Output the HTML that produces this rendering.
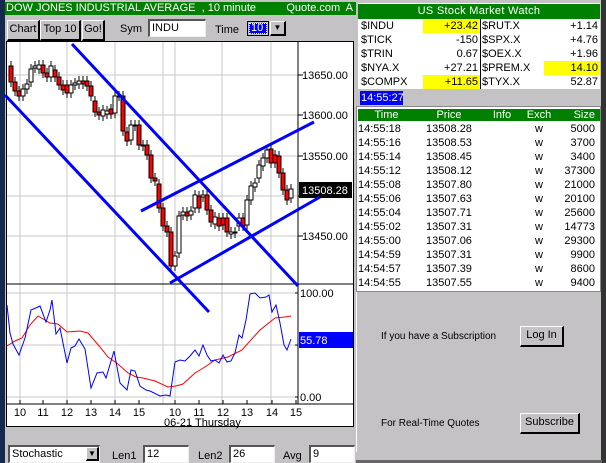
<!DOCTYPE html>
<html><head><meta charset="utf-8">
<style>
*{margin:0;padding:0;box-sizing:border-box}
body{width:606px;height:463px;background:#c4c2c4;font-family:"Liberation Sans",sans-serif;font-size:11px;position:relative;overflow:hidden}
.a{position:absolute}
.btn{position:absolute;background:#c4c2c4;border-top:1px solid #fff;border-left:1px solid #fff;border-right:2px solid #000;border-bottom:2px solid #000;text-align:center;line-height:17px;font-size:11px}
.inp{position:absolute;background:#fff;border-top:2px solid #555;border-left:2px solid #555;border-right:1px solid #eee;border-bottom:1px solid #eee;padding-left:2px;line-height:15px}
.q td{height:14px;line-height:14px;padding:0 2px;white-space:nowrap}
.t td{height:14px;line-height:14px;white-space:nowrap}
</style></head><body>
<div class="a" style="left:0;top:0;width:5px;height:463px;background:#142850"></div>
<div class="a" style="left:601px;top:0;width:5px;height:463px;background:#333"></div>
<!-- left header -->
<div class="a" style="left:5px;top:2px;width:351px;height:13px;background:#008000;color:#fff;line-height:13px;font-size:11px;padding-left:1px">DOW JONES INDUSTRIAL AVERAGE&nbsp; , 10 minute<span style="position:absolute;right:3px">Quote.com&nbsp; A</span></div>
<div class="btn" style="left:7px;top:20px;width:33px;height:21px">Chart</div>
<div class="btn" style="left:40px;top:20px;width:41px;height:21px">Top 10</div>
<div class="btn" style="left:82px;top:20px;width:23px;height:21px">Go!</div>
<div class="a" style="left:120px;top:23px">Sym</div>
<div class="inp" style="left:148px;top:19px;width:58px;height:18px">INDU</div>
<div class="a" style="left:215px;top:24px">Time</div>
<div class="a" style="left:247px;top:21px;width:22px;height:15px;background:#c4c2c4;border:1px solid #000"><div style="margin:1px;width:18px;height:11px;background:#00f;color:#fff;border:1px dotted #fff;line-height:9px;padding-left:1px">10</div></div>
<div class="btn" style="left:270px;top:21px;width:16px;height:15px;line-height:12px;font-size:8px">▼</div>
<!-- chart -->
<div class="a" style="left:6px;top:41px;width:348px;height:386px;background:#fff;border:1px solid #000"></div>
<svg class="a" style="left:0;top:0" width="360" height="430" id="ch" font-family="Liberation Sans" font-size="11"></svg>
<!-- bottom controls -->
<div class="inp" style="left:8px;top:445px;width:92px;height:18px;line-height:15px">Stochastic</div>
<div class="btn" style="left:86px;top:447px;width:13px;height:14px;line-height:11px;font-size:8px">▼</div>
<div class="a" style="left:112px;top:450px">Len1</div>
<div class="inp" style="left:143px;top:445px;width:46px;height:18px">12</div>
<div class="a" style="left:198px;top:450px">Len2</div>
<div class="inp" style="left:229px;top:445px;width:46px;height:18px">26</div>
<div class="a" style="left:283px;top:450px">Avg</div>
<div class="inp" style="left:309px;top:445px;width:46px;height:18px">9</div>
<!-- right panel -->
<div class="a" style="left:358px;top:3px;width:242px;height:86px;background:#fff"></div>
<div class="a" style="left:358px;top:4px;width:242px;height:15px;background:#008000;color:#fff;text-align:center;line-height:15px;letter-spacing:0.3px">US Stock Market Watch</div>
<div class="a" style="left:480px;top:19px;width:1px;height:70px;background:#000"></div>
<table class="a q" style="left:359px;top:19px;border-collapse:collapse;width:241px">
<tr><td style="width:64px">$INDU</td><td style="width:57px;text-align:right;background:#ff0">+23.42</td><td style="width:64px">$RUT.X</td><td style="text-align:right">+1.14</td></tr>
<tr><td>$TICK</td><td style="text-align:right">-150</td><td>$SPX.X</td><td style="text-align:right">+4.76</td></tr>
<tr><td>$TRIN</td><td style="text-align:right">0.67</td><td>$OEX.X</td><td style="text-align:right">+1.96</td></tr>
<tr><td>$NYA.X</td><td style="text-align:right">+27.21</td><td>$PREM.X</td><td style="text-align:right;background:#ff0">14.10</td></tr>
<tr><td>$COMPX</td><td style="text-align:right;background:#ff0">+11.65</td><td>$TYX.X</td><td style="text-align:right">52.87</td></tr>
</table>
<div class="a" style="left:360px;top:91px;width:43px;height:14px;background:#00f;color:#fff;line-height:14px;padding-left:1px">14:55:27</div>
<div class="a" style="left:357px;top:107px;width:243px;height:184px;background:#fff;border:1px solid #fff;outline:1px solid #888"></div>
<div class="a" style="left:358px;top:109px;width:242px;height:12px;background:#008000"></div>
<table class="a t" style="left:358px;top:108px;border-collapse:collapse;width:240px">
<tr style="color:#fff"><td style="width:57px;text-align:center">Time</td><td style="width:68px;text-align:center">Price</td><td style="width:38px;text-align:center">Info</td><td style="width:36px;text-align:center">Exch</td><td style="text-align:right;padding-right:3px">Size</td></tr>
<tr><td>14:55:18</td><td style="text-align:center">13508.28</td><td></td><td style="text-align:center">w</td><td style="text-align:right;padding-right:3px">5000</td></tr>
<tr><td>14:55:16</td><td style="text-align:center">13508.53</td><td></td><td style="text-align:center">w</td><td style="text-align:right;padding-right:3px">3700</td></tr>
<tr><td>14:55:14</td><td style="text-align:center">13508.45</td><td></td><td style="text-align:center">w</td><td style="text-align:right;padding-right:3px">3400</td></tr>
<tr><td>14:55:12</td><td style="text-align:center">13508.12</td><td></td><td style="text-align:center">w</td><td style="text-align:right;padding-right:3px">37300</td></tr>
<tr><td>14:55:08</td><td style="text-align:center">13507.80</td><td></td><td style="text-align:center">w</td><td style="text-align:right;padding-right:3px">21000</td></tr>
<tr><td>14:55:06</td><td style="text-align:center">13507.63</td><td></td><td style="text-align:center">w</td><td style="text-align:right;padding-right:3px">20100</td></tr>
<tr><td>14:55:04</td><td style="text-align:center">13507.71</td><td></td><td style="text-align:center">w</td><td style="text-align:right;padding-right:3px">25600</td></tr>
<tr><td>14:55:02</td><td style="text-align:center">13507.31</td><td></td><td style="text-align:center">w</td><td style="text-align:right;padding-right:3px">14773</td></tr>
<tr><td>14:55:00</td><td style="text-align:center">13507.06</td><td></td><td style="text-align:center">w</td><td style="text-align:right;padding-right:3px">29300</td></tr>
<tr><td>14:54:59</td><td style="text-align:center">13507.31</td><td></td><td style="text-align:center">w</td><td style="text-align:right;padding-right:3px">9900</td></tr>
<tr><td>14:54:57</td><td style="text-align:center">13507.39</td><td></td><td style="text-align:center">w</td><td style="text-align:right;padding-right:3px">8600</td></tr>
<tr><td>14:54:55</td><td style="text-align:center">13507.55</td><td></td><td style="text-align:center">w</td><td style="text-align:right;padding-right:3px">9400</td></tr>
</table>
<div class="a" style="left:356px;top:292px;width:1px;height:160px;background:#fff"></div>
<div class="a" style="left:381px;top:331px;font-size:10px">If you have a Subscription</div>
<div class="btn" style="left:520px;top:326px;width:44px;height:21px">Log In</div>
<div class="a" style="left:381px;top:418px;font-size:10px">For Real-Time Quotes</div>
<div class="btn" style="left:520px;top:413px;width:60px;height:21px">Subscribe</div>
<div class="a" style="left:356px;top:460px;width:246px;height:3px;background:#666"></div>
<script>
var s='';
function L(x1,y1,x2,y2,c,w){s+='<line x1="'+x1+'" y1="'+y1+'" x2="'+x2+'" y2="'+y2+'" stroke="'+c+'" stroke-width="'+w+'"/>';}
function T(x,y,t,c,a){s+='<text x="'+x+'" y="'+y+'" fill="'+(c||'#000')+'"'+(a?' text-anchor="'+a+'"':'')+'>'+t+'</text>';}
var gx=[20,67,115,163,175,222,271];
gx.forEach(function(x){L(x,42,x,404,'#c8c8c8',1)});
[75,115,156,196,236].forEach(function(y){L(7,y,298,y,'#c8c8c8',1)});
[293,345,397].forEach(function(y){L(7,y,298,y,'#c8c8c8',1)});
L(7,284,353,284,'#000',1);L(298,42,298,404,'#000',1);L(7,404,353,404,'#000',1);
[75,115,156,196,236].forEach(function(y){L(298,y,303,y,'#000',1)});
[293,345,397].forEach(function(y){L(295,y,298,y,'#000',1)});
T(302,79,'13650.00');T(302,119,'13600.00');T(302,160,'13550.00');T(302,240,'13450.00');
s+='<rect x="299" y="182" width="53" height="16" fill="#000"/>';T(302,194,'13508.28','#fff');
T(300,297,'100.00');T(300,401,'0.00');
s+='<rect x="299" y="332" width="54" height="16" fill="#00f"/>';T(300,344,'55.78','#fff');
var xl=[[20,'10'],[43,'11'],[67,'12'],[91,'13'],[115,'14'],[139,'15'],[175,'10'],[199,'11'],[223,'12'],[247,'13'],[272,'14'],[296,'15']];
xl.forEach(function(p){T(p[0],416,p[1],'#000','middle');L(p[0],404,p[0],400,'#000',1)});
T(164,426,'06-21 Thursday');
var c=[[11,66,82,1],[15,82,91,1],[19,91,96,1],[23,96,89,0],[27,89,84,0],[31,82,69,0],[35,68,66,0],[39,69,65,0],[43,65,73,1],[47,73,77,1],[51,77,66,0],[55,70,77,1],[59,77,85,1],[63,85,90,1],[67,85,93,1],[71,93,85,0],[75,85,83,0],[79,84,81,0],[83,81,84,1],[87,81,86,1],[91,86,96,1],[95,101,112,1],[99,112,115,1],[103,116,110,0],[107,114,111,0],[111,109,114,1],[115,113,96,0],[119,96,96,0],[123,96,131,1],[127,132,141,1],[131,140,125,0],[135,126,125,0],[139,125,145,1],[143,145,146,0],[147,145,155,1],[151,155,178,1],[155,178,181,1],[159,184,208,1],[163,208,226,1],[167,226,232,1],[171,232,266,1],[175,266,256,0],[179,253,216,0],[183,215,212,0],[187,212,216,1],[191,215,211,0],[195,208,195,0],[199,196,208,1],[203,197,195,0],[207,195,210,1],[211,210,222,1],[215,224,217,0],[219,218,226,1],[223,218,225,1],[227,218,232,1],[231,234,232,0],[235,233,232,0],[239,226,218,0],[243,218,226,1],[247,225,200,0],[251,200,186,0],[255,187,183,0],[259,178,165,0],[263,166,158,0],[267,158,150,0],[271,149,163,1],[275,155,163,1],[279,156,173,1],[283,173,190,1],[287,190,200,1],[291,198,189,0]];
c.forEach(function(k){var t=Math.min(k[1],k[2]),b=Math.max(k[1],k[2]);L(k[0],t-5,k[0],b+5,'#000',1);
s+='<rect x="'+(k[0]-2)+'" y="'+t+'" width="4" height="'+Math.max(b-t,1)+'" fill="'+(k[3]?'#f00':'#fff')+'" stroke="#000" stroke-width="1"/>';});
L(5,95,209,312,'#00f',3);L(72,44,298,286,'#00f',3);L(141,211,314,122,'#00f',3);L(170,283,320,197,'#00f',3);
var bl=[[7,305],[10,333],[13,344],[19,355],[25,338],[31,310],[38,307],[40,306],[46,322],[50,310],[52,300],[56,334],[60,328],[67,363],[71,348],[75,346],[79,339],[85,349],[91,388],[97,373],[103,372],[106,378],[114,351],[120,383],[127,390],[131,370],[135,371],[140,386],[146,390],[150,391],[160,396],[166,395],[170,396],[175,362],[180,360],[185,361],[190,356],[195,350],[199,356],[203,345],[207,355],[211,361],[215,360],[219,363],[223,355],[227,362],[231,361],[235,353],[239,335],[242,338],[246,320],[250,294],[255,293],[260,298],[266,297],[269,295],[272,312],[276,305],[280,323],[284,345],[287,350],[291,339]];
var rl=[[7,346],[15,341],[22,338],[30,325],[38,316],[50,323],[58,324],[67,332],[80,331],[88,333],[100,347],[108,357],[118,364],[128,373],[136,377],[143,378],[155,381],[168,387],[176,386],[183,384],[195,373],[205,367],[215,360],[228,357],[242,350],[260,330],[275,318],[285,317],[291,316]];
s+='<polyline fill="none" stroke="#f00" stroke-width="1" points="'+rl.join(' ')+'"/>';
s+='<polyline fill="none" stroke="#00f" stroke-width="1" points="'+bl.join(' ')+'"/>';
document.getElementById('ch').innerHTML=s;
</script>
</body></html>
